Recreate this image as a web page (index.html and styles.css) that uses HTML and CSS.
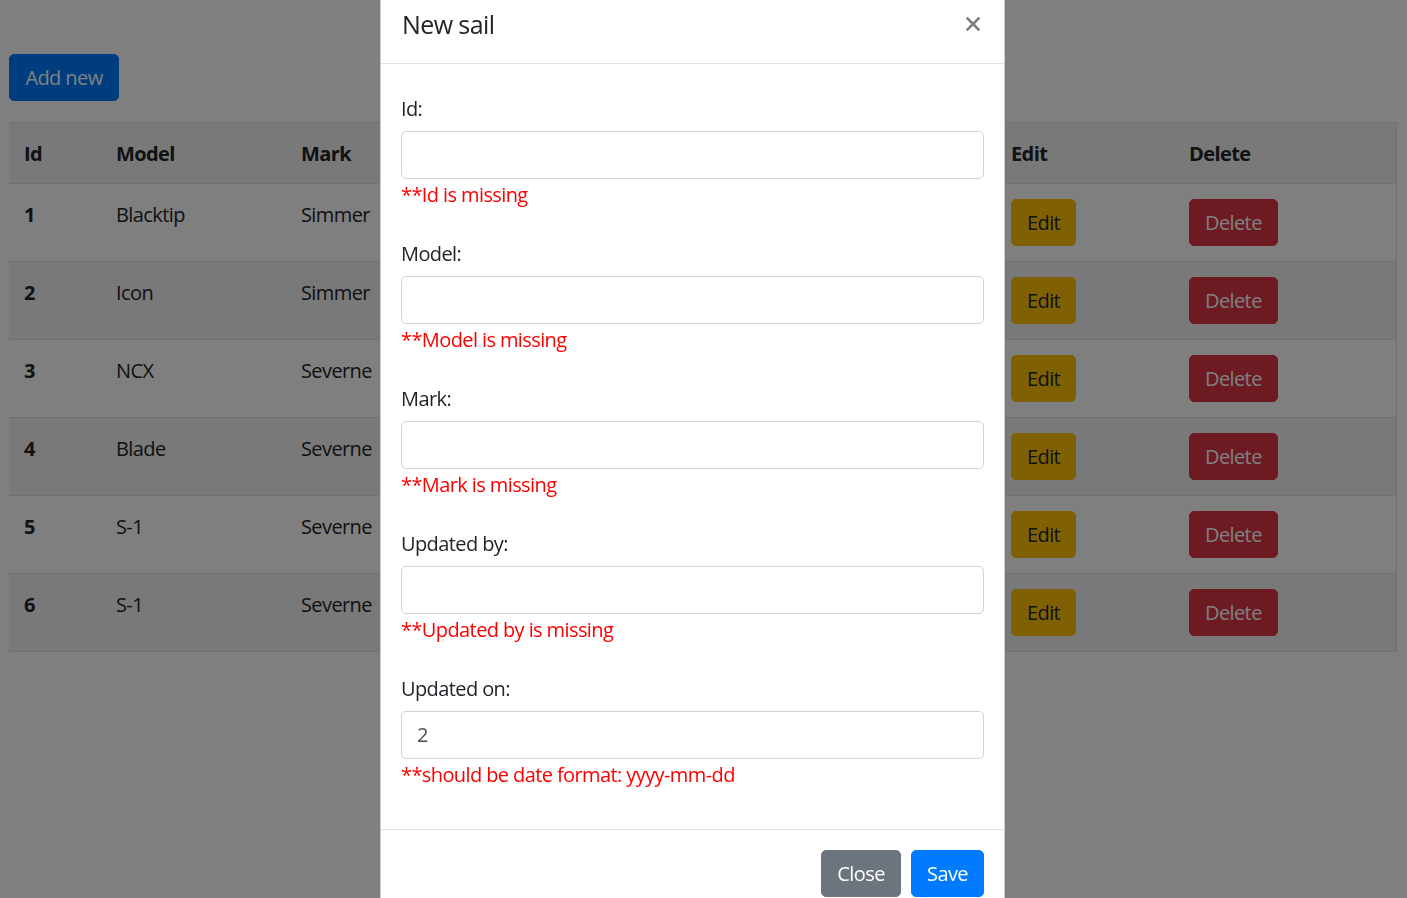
FILE: index.html
```html
<!DOCTYPE html>
<html lang="en">
<head>
<meta charset="utf-8">
<title>Sails</title>
<link rel="stylesheet" href="styles.css">
</head>
<body>
<div class="page">
  <button class="btn btn-primary add-btn">Add new</button>
  <table class="table">
    <colgroup>
      <col class="c-id"><col class="c-model"><col class="c-mark"><col class="c-upby"><col class="c-upon"><col class="c-edit"><col class="c-del">
    </colgroup>
    <tr class="head"><th>Id</th><th>Model</th><th>Mark</th><th>Updated by</th><th>Updated on</th><th>Edit</th><th>Delete</th></tr>
    <tr><th>1</th><td>Blacktip</td><td>Simmer</td><td>admin</td><td>2020-01-01</td><td><button class="btn btn-warning">Edit</button></td><td><button class="btn btn-danger">Delete</button></td></tr>
    <tr class="stripe"><th>2</th><td>Icon</td><td>Simmer</td><td>admin</td><td>2020-01-01</td><td><button class="btn btn-warning">Edit</button></td><td><button class="btn btn-danger">Delete</button></td></tr>
    <tr><th>3</th><td>NCX</td><td>Severne</td><td>admin</td><td>2020-01-01</td><td><button class="btn btn-warning">Edit</button></td><td><button class="btn btn-danger">Delete</button></td></tr>
    <tr class="stripe"><th>4</th><td>Blade</td><td>Severne</td><td>admin</td><td>2020-01-01</td><td><button class="btn btn-warning">Edit</button></td><td><button class="btn btn-danger">Delete</button></td></tr>
    <tr><th>5</th><td>S-1</td><td>Severne</td><td>admin</td><td>2020-01-01</td><td><button class="btn btn-warning">Edit</button></td><td><button class="btn btn-danger">Delete</button></td></tr>
    <tr class="stripe"><th>6</th><td>S-1</td><td>Severne</td><td>admin</td><td>2020-01-01</td><td><button class="btn btn-warning">Edit</button></td><td><button class="btn btn-danger">Delete</button></td></tr>
  </table>
</div>

<div class="backdrop"></div>

<div class="modal">
  <div class="modal-header">
    <h5 class="modal-title">New sail</h5>
    <button class="close" aria-label="Close"><svg class="close-icon" width="14" height="14" viewBox="0 0 14 14"><path d="M1.5 1.5 L12.5 12.5 M12.5 1.5 L1.5 12.5" stroke="#000" stroke-width="2.6" stroke-linecap="square" fill="none"/></svg></button>
  </div>
  <div class="modal-body">
    <div class="form-group">
      <label>Id:</label>
      <input class="form-control" type="text">
      <div class="error">**Id is missing</div>
    </div>
    <div class="form-group">
      <label>Model:</label>
      <input class="form-control" type="text">
      <div class="error">**Model is missing</div>
    </div>
    <div class="form-group">
      <label>Mark:</label>
      <input class="form-control" type="text">
      <div class="error">**Mark is missing</div>
    </div>
    <div class="form-group">
      <label>Updated by:</label>
      <input class="form-control" type="text">
      <div class="error">**Updated by is missing</div>
    </div>
    <div class="form-group">
      <label>Updated on:</label>
      <input class="form-control" type="text" value="2">
      <div class="error">**should be date format: yyyy-mm-dd</div>
    </div>
  </div>
  <div class="modal-footer">
    <button class="btn btn-secondary btn-close">Close</button>
    <button class="btn btn-primary">Save</button>
  </div>
</div>
</body>
</html>
```

FILE: styles.css
```css
* { box-sizing: border-box; }

html, body {
  margin: 0;
  padding: 0;
  height: 100%;
  overflow: hidden;
}

body {
  background: #fff;
  color: #212529;
  font-family: "Open Sans", "Noto Sans", sans-serif;
  font-size: 20px;
  line-height: 30px;
  letter-spacing: -0.6px;
}

.page {
  padding: 54px 10px 0 9px;
}

.btn {
  display: inline-block;
  font-family: inherit;
  font-size: 20px;
  line-height: 30px;
  letter-spacing: inherit;
  padding: 8px 15px 7px;
  border: 1px solid transparent;
  border-radius: 5px;
  height: 47px;
  cursor: pointer;
}

.btn-primary { background: #007bff; border-color: #007bff; color: #fff; }
.btn-secondary { background: #6c757d; border-color: #6c757d; color: #fff; }
.btn-warning { background: #ffc107; border-color: #ffc107; color: #212529; }
.btn-danger { background: #dc3545; border-color: #dc3545; color: #fff; }

.btn-close { width: 80px; }

.add-btn {
  display: block;
  width: 110px;
  margin-bottom: 21px;
}

.table {
  width: 100%;
  border-collapse: collapse;
  table-layout: fixed;
  border-right: 1px solid #dee2e6;
  border-bottom: 1px solid #dee2e6;
}

.c-id { width: 92px; }
.c-model { width: 185px; }
.c-mark { width: 236px; }
.c-upby { width: 237px; }
.c-upon { width: 237px; }
.c-edit { width: 178px; }
.c-del { width: auto; }

.table th, .table td {
  padding: 16px 15px 14px;
  border-top: 1px solid #dee2e6;
  text-align: left;
  vertical-align: top;
  white-space: nowrap;
}

.table td:nth-child(6), .table td:nth-child(7) {
  padding-top: 15px;
  padding-bottom: 15px;
}

.table th { font-weight: 700; }
.table td { font-weight: 400; }

.table .head, .table .stripe { background: rgba(0, 0, 0, 0.05); }

.backdrop {
  position: fixed;
  inset: 0;
  background: rgba(0, 0, 0, 0.5);
}

.modal {
  position: absolute;
  top: -16px;
  left: 380px;
  width: 625px;
  background: #fff;
  border: 1px solid rgba(0, 0, 0, 0.2);
  border-radius: 6px;
}

.modal-header {
  display: flex;
  align-items: flex-start;
  justify-content: space-between;
  padding: 21px 20px 19px 21px;
  border-bottom: 1px solid #dee2e6;
}

.modal-title {
  margin: 0;
  font-size: 25px;
  line-height: 37.5px;
  font-weight: 400;
}

.close {
  display: flex;
  align-items: center;
  justify-content: center;
  width: 34px;
  height: 37.5px;
  background: none;
  border: 0;
  padding: 0;
  margin: -1px -6px 0 auto;
  opacity: 0.5;
  cursor: pointer;
}

.close-icon { display: block; }

.modal-body {
  padding: 20px;
}

.form-group {
  padding-top: 9px;
  margin-bottom: 20px;
}

.form-group label {
  display: block;
  padding-top: 1px;
  margin-bottom: 7px;
}

.form-control {
  display: block;
  width: 100%;
  height: 48px;
  padding: 7.5px 15px;
  font-family: inherit;
  font-size: 20px;
  letter-spacing: inherit;
  color: #495057;
  background: #fff;
  border: 1px solid #ced4da;
  border-radius: 5px;
}

.error {
  color: #ff0000;
  padding-top: 1px;
  margin-bottom: -1px;
}

.modal-footer {
  display: flex;
  justify-content: flex-end;
  gap: 10px;
  padding: 20px 20px 20px 20px;
  border-top: 1px solid #dee2e6;
}
```
